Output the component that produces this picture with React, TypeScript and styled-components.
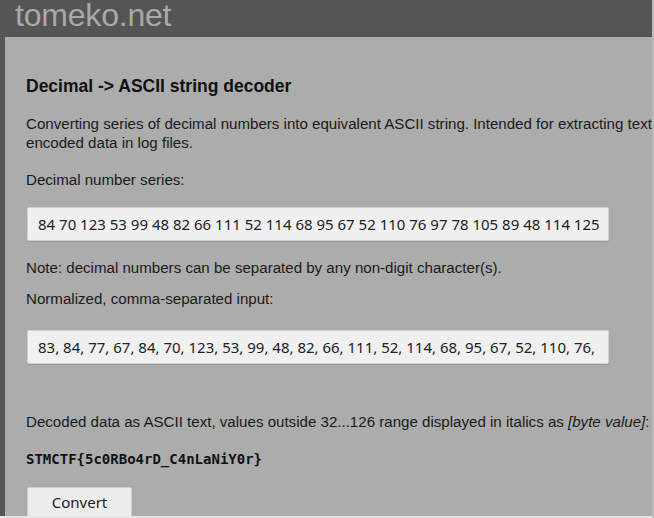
import React from "react";
import styled, { createGlobalStyle } from "styled-components";

const Global = createGlobalStyle`
  html, body { margin: 0; padding: 0; width: 654px; height: 518px; overflow: hidden; background: #555555; }
  #root { width: 654px; height: 518px; }
`;

const Page = styled.div`
  width: 654px;
  height: 518px;
  box-sizing: border-box;
  display: flex;
  flex-direction: column;
  overflow: hidden;
  border-right: 2px solid #b9b9b9;
  font-family: "Liberation Sans", Arial, sans-serif;
`;

const Header = styled.header`
  height: 37px;
  flex: none;
  background: #555555;
  padding-left: 15px;
  box-sizing: border-box;
`;

const Logo = styled.div`
  color: #a9a9a9;
  font-size: 32px;
  line-height: 31px;
  letter-spacing: -0.2px;
`;

const Body = styled.div`
  flex: 1;
  display: flex;
  min-height: 0;
  border-bottom: 2px solid #e4e4e4;
`;

const Rail = styled.div`
  width: 5px;
  flex: none;
  background: #555555;
`;

const Main = styled.main`
  flex: 1;
  background: #acacac;
  padding: 39px 0 0 21px;
  overflow: hidden;
`;

const Title = styled.h1`
  margin: 0 0 18px;
  font-size: 17.5px;
  font-weight: bold;
  color: #111;
  line-height: 20px;
`;

const Text = styled.p<{ $gap: number }>`
  margin: 0 0 ${(p) => p.$gap}px;
  font-size: 15.1px;
  line-height: 19px;
  color: #1a1a1a;
  white-space: nowrap;
`;

const Field = styled.div<{ $gap: number }>`
  width: 582px;
  height: 34px;
  box-sizing: border-box;
  margin: 0 0 ${(p) => p.$gap}px 1px;
  background: #f0f0f0;
  border: 1px solid #d2d2d2;
  border-radius: 2px;
  box-shadow: 0 1px 1px rgba(0, 0, 0, 0.12);
  display: flex;
  align-items: center;
  padding: 0 8px 0 10px;
`;

const FieldValue = styled.span`
  flex: 1;
  min-width: 0;
  overflow: hidden;
  white-space: nowrap;
  font-family: "Noto Sans", sans-serif;
  font-size: 15px;
  color: #222;
`;

const Result = styled.div`
  font-family: "DejaVu Sans Mono", monospace;
  font-weight: bold;
  font-size: 14px;
  color: #111;
  line-height: 17px;
  margin: 0 0 19px;
`;

const Button = styled.button`
  width: 105px;
  height: 30px;
  margin-left: 1px;
  background: #ececec;
  border: 1px solid #cfcfcf;
  border-radius: 2px;
  font-family: "Noto Sans", sans-serif;
  font-size: 15px;
  color: #222;
  padding: 0;
`;

export default function App() {
  return (
    <>
      <Global />
      <Page>
        <Header>
          <Logo>tomeko.net</Logo>
        </Header>
        <Body>
          <Rail />
          <Main>
            <Title>Decimal -&gt; ASCII string decoder</Title>
            <Text $gap={18}>
              Converting series of decimal numbers into equivalent ASCII string. Intended for extracting text
              <br />
              encoded data in log files.
            </Text>
            <Text $gap={18}>Decimal number series:</Text>
            <Field $gap={17}>
              <FieldValue>84 70 123 53 99 48 82 66 111 52 114 68 95 67 52 110 76 97 78 105 89 48 114 125</FieldValue>
            </Field>
            <Text $gap={12}>Note: decimal numbers can be separated by any non-digit character(s).</Text>
            <Text $gap={22}>Normalized, comma-separated input:</Text>
            <Field $gap={48}>
              <FieldValue>83, 84, 77, 67, 84, 70, 123, 53, 99, 48, 82, 66, 111, 52, 114, 68, 95, 67, 52, 110, 76,</FieldValue>
            </Field>
            <Text $gap={20}>
              Decoded data as ASCII text, values outside 32...126 range displayed in italics as <i>[byte value]</i>:
            </Text>
            <Result>STMCTF{"{"}5c0RBo4rD_C4nLaNiY0r{"}"}</Result>
            <Button>Convert</Button>
          </Main>
        </Body>
      </Page>
    </>
  );
}
